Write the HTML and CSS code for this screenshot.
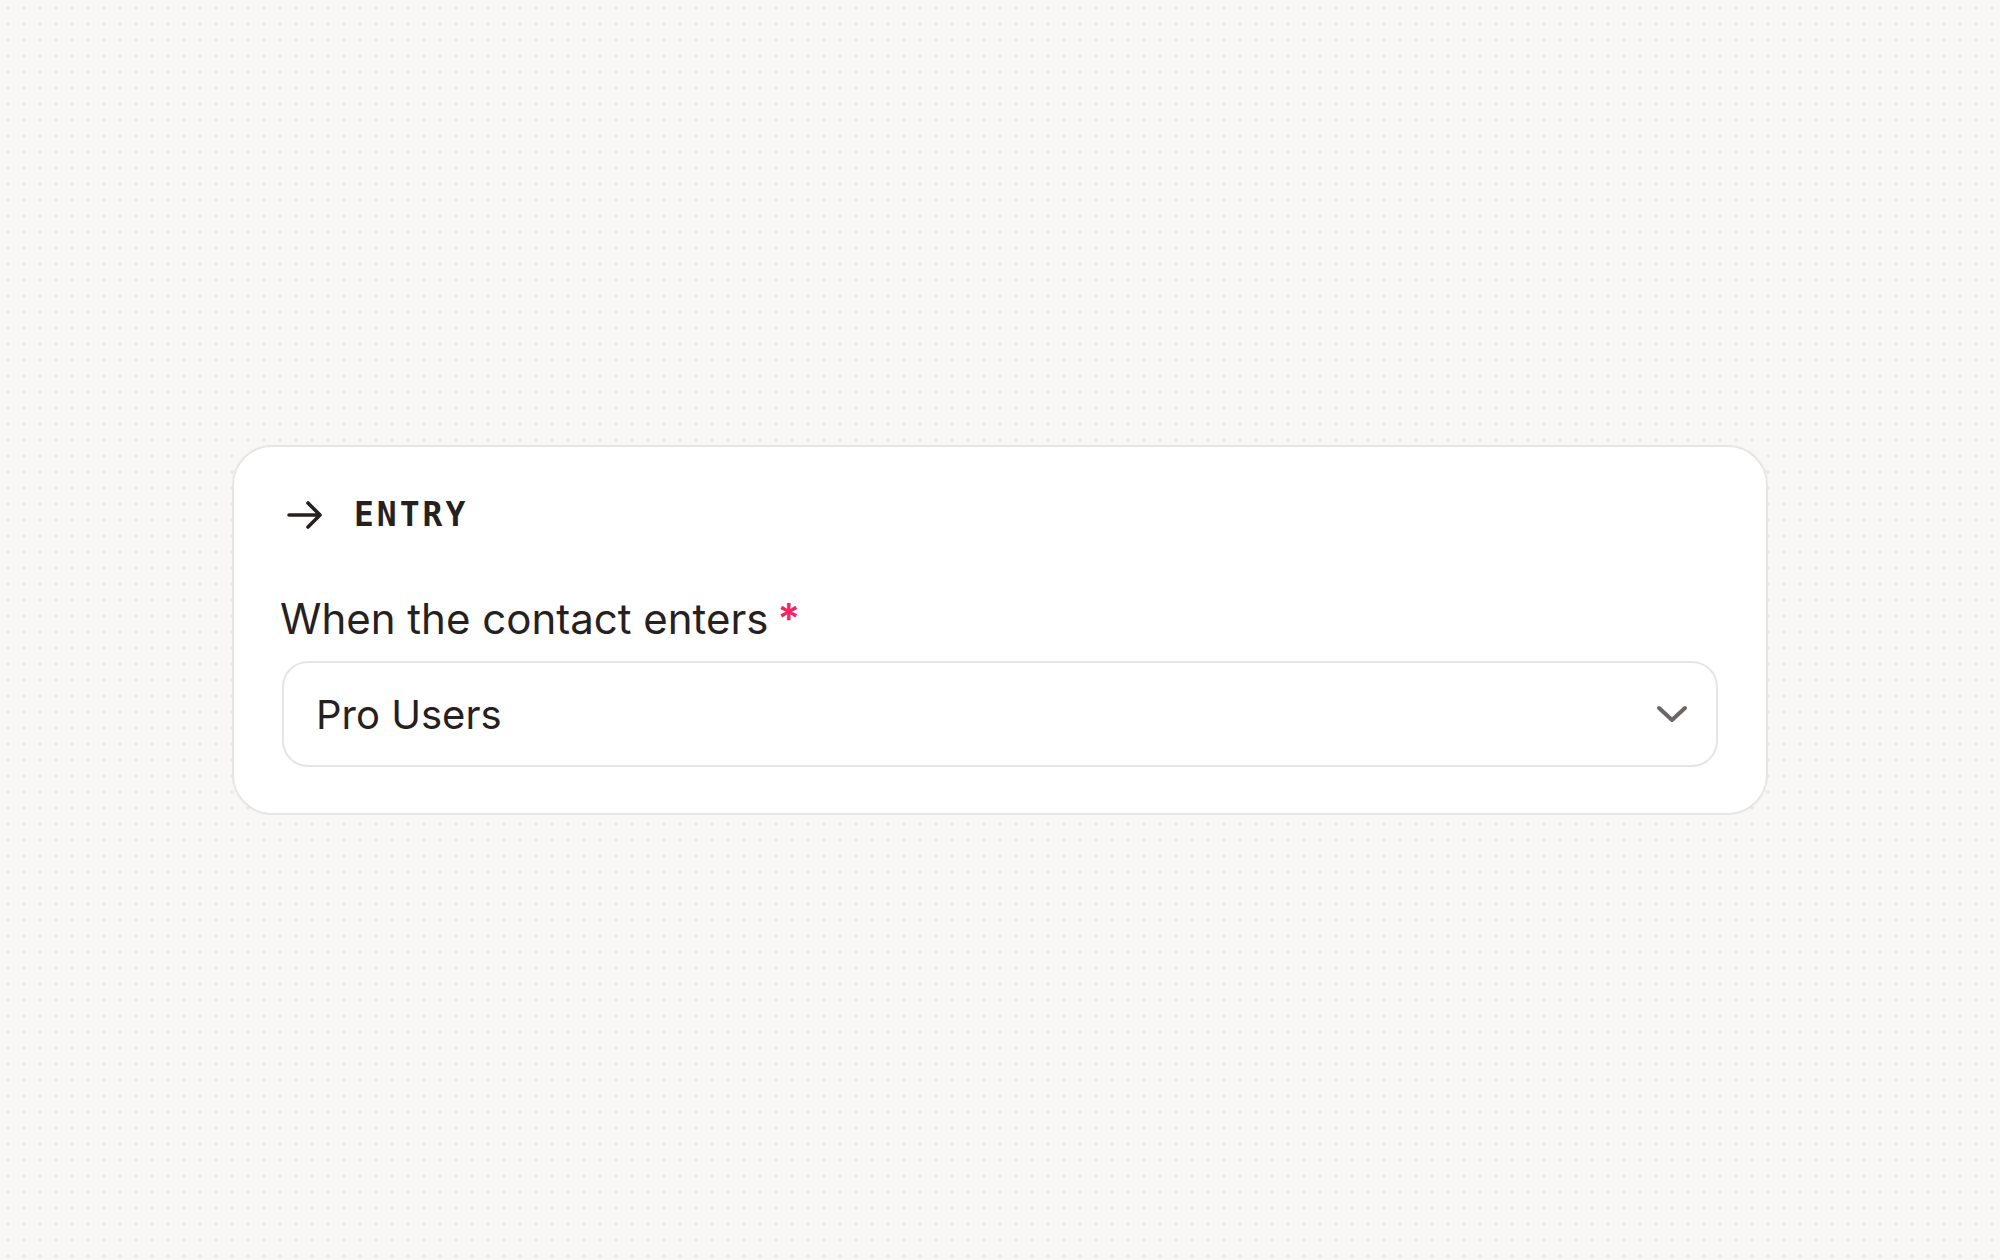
FILE: index.html
```html
<!DOCTYPE html>
<html lang="en">
<head>
<meta charset="utf-8">
<title>Entry</title>
<link rel="stylesheet" href="styles.css">
</head>
<body>
<main class="canvas">
  <section class="card">
    <header class="card-head">
      <svg class="head-icon" width="44" height="36" viewBox="0 0 44 36" aria-hidden="true">
        <path d="M7 18 H38 M26 6 L38 18 L26 30" fill="none" stroke="#26211f" stroke-width="3.6" stroke-linecap="round" stroke-linejoin="round"/>
      </svg>
      <span class="head-title">ENTRY</span>
    </header>
    <label class="field-label">When the contact enters<span class="req">*</span></label>
    <div class="select">
      <span class="select-value">Pro Users</span>
      <svg class="chev" width="32" height="20" viewBox="0 0 32 20" aria-hidden="true">
        <path d="M3 4 L16 16 L29 4" fill="none" stroke="#6c6662" stroke-width="4" stroke-linecap="round" stroke-linejoin="round"/>
      </svg>
    </div>
  </section>
</main>
</body>
</html>
```

FILE: styles.css
```css
html, body {
  margin: 0;
  padding: 0;
}
body {
  width: 2000px;
  height: 1260px;
  background-color: #f8f7f5;
  background-image: radial-gradient(circle at 8px 8px, #ecebe8 1.6px, transparent 2.2px);
  background-size: 16px 16px;
  font-family: Inter, "Liberation Sans", Arial, sans-serif;
  color: #26211f;
}
.canvas {
  width: 2000px;
  height: 1260px;
  display: flex;
  align-items: center;
  justify-content: center;
}
.card {
  box-sizing: border-box;
  width: 1536px;
  height: 370px;
  background: #ffffff;
  border: 2px solid #e6e5e3;
  border-radius: 40px;
  padding: 50px 48px 46px;
  display: flex;
  flex-direction: column;
}
.card-head {
  display: flex;
  align-items: center;
  height: 36px;
  margin-bottom: 60px;
}
.head-icon {
  display: block;
  margin-right: 28px;
}
.head-title {
  font-family: "DejaVu Sans Mono", monospace;
  font-weight: 700;
  font-size: 33px;
  letter-spacing: 3px;
  line-height: 36px;
  color: #26211f;
}
.field-label {
  display: block;
  font-size: 42px;
  line-height: 52px;
  height: 52px;
  margin-bottom: 16px;
  margin-left: -2px;
  color: #26211f;
}
.req {
  color: #f5245f;
  font-weight: 600;
  margin-left: 9px;
}
.select {
  box-sizing: border-box;
  height: 106px;
  border: 2px solid #e6e5e3;
  border-radius: 26px;
  padding: 0 28px 0 32px;
  display: flex;
  align-items: center;
  justify-content: space-between;
}
.select-value {
  font-size: 40px;
  color: #26211f;
}
.chev {
  display: block;
}
```
